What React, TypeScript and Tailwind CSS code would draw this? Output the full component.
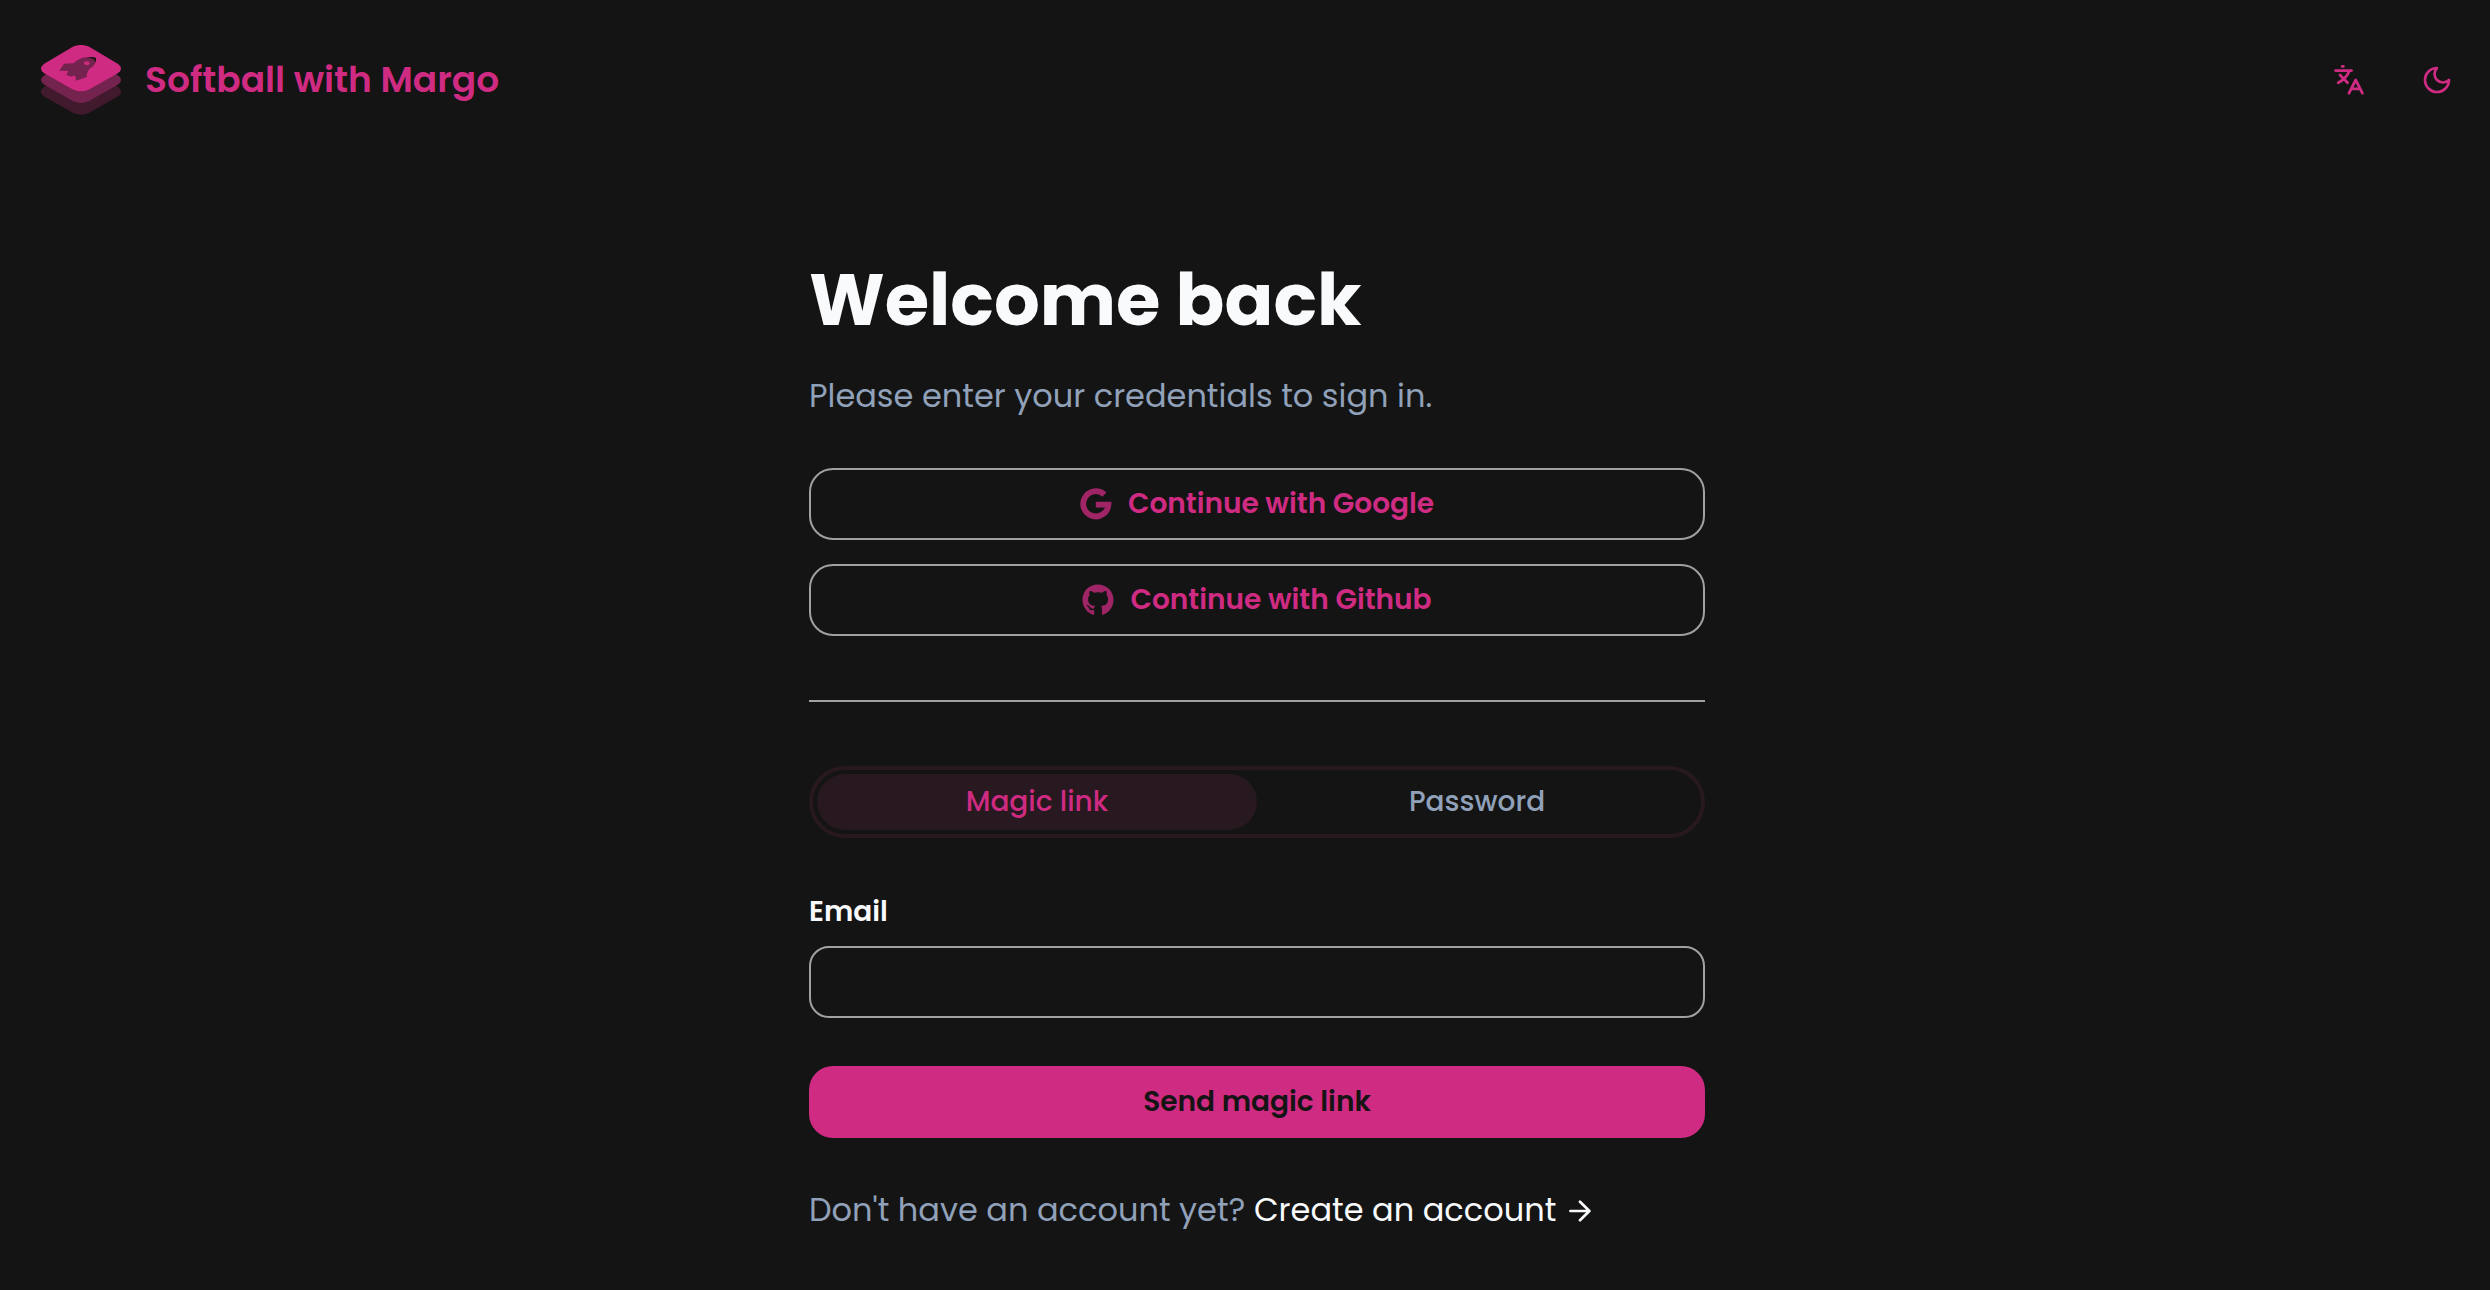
import { useState } from "react";
import { FaGithub } from "react-icons/fa";

const tabs = [
  { id: "magic", label: "Magic link" },
  { id: "password", label: "Password" },
];

const Logo = () => (
  <svg className="h-[70px] w-20 text-[#cf2b82]" viewBox="0 0 80 70" fill="currentColor" aria-hidden="true">
    <defs>
      <path id="tile" d="M31 2.3C36.5-.8 43.5-.8 49 2.3L76.3 18.4C81.2 21.4 81.2 25.6 76.3 28.5L49 44C43.5 47.1 36.5 47.1 31 44L3.7 28.5C-1.2 25.6-1.2 21.4 3.7 18.4Z" />
    </defs>
    <use href="#tile" y="23.2" className="text-[#421a2d]" />
    <use href="#tile" y="11.6" className="text-[#74224e]" />
    <use href="#tile" />
    <g className="text-[#74224e]">
      <path d="M18.3 25.7L23 18.7L32.5 18.2C36 14.6 41.5 12 48 12L54.7 13.2C55.5 17.4 53.5 21.2 48.7 23.6C46.8 26 45.5 29 45.7 32L35 35.7L34.3 30.5L30 31.5L25.3 30L27.5 26Z" />
      <path className="text-[#141414]" d="M47 12.4C50 11.8 52.5 12 54.8 12.8C55.2 14.5 55 16 54.6 17.3C53.8 14.6 51 12.8 47 12.4Z" />
      <ellipse className="text-[#cf2b82]" cx="45.8" cy="18.2" rx="2.8" ry="1.9" />
    </g>
  </svg>
);

const GoogleIcon = () => (
  <svg className="size-8 opacity-75" viewBox="0 0 32 32" fill="none" stroke="currentColor" strokeWidth="5.8" aria-hidden="true">
    <path d="M24.4 6.6A12.6 12.6 0 1 0 28.4 16.6H15.8" />
  </svg>
);

const App = () => {
  const [active, setActive] = useState("magic");

  return (
    <div className="min-h-screen bg-[#141414] pb-12 font-['Poppins','Inter',sans-serif] text-slate-50">
      <header className="flex items-center justify-between pt-[45px] pr-[37px] pl-[41px] text-[#cf2b82]">
        <a href="#" className="flex items-center gap-6 text-[36px] leading-[70px] font-semibold">
          <Logo />
          Softball with Margo
        </a>
        <div className="flex items-center gap-14">
          <button type="button" aria-label="Change language">
            <svg className="size-8" viewBox="0 0 32 32" fill="none" stroke="currentColor" strokeWidth="2.8" strokeLinecap="round" strokeLinejoin="round">
              <path d="M2.6 6.6H18.6M9.2 2.4H10.4M7 11L14.6 18.8M16.2 7C14.8 11.5 10 16.5 5.2 18.7M16 29.2L22.7 16L29.4 29.2M18.4 24.8H27" />
            </svg>
          </button>
          <button type="button" aria-label="Toggle dark mode">
            <svg className="size-8" viewBox="0 0 24 24" fill="none" stroke="currentColor" strokeWidth="2" strokeLinecap="round" strokeLinejoin="round">
              <path d="M12 3a6 6 0 0 0 9 9 9 9 0 1 1-9-9Z" />
            </svg>
          </button>
        </div>
      </header>

      <main className="mx-auto mt-[149px] box-content max-w-4xl pl-6">
        <h1 className="text-[72px] leading-[72px] font-bold">Welcome back</h1>
        <p className="mt-9 text-[32px] leading-[48px] text-slate-400">Please enter your credentials to sign in.</p>

        <div className="mt-12 flex flex-col gap-6 text-[28px] font-semibold text-[#cf2b82]">
          <button type="button" className="flex h-[72px] items-center justify-center gap-4 rounded-3xl border-2 border-[#a1a1a1]">
            <GoogleIcon />
            Continue with Google
          </button>
          <button type="button" className="flex h-[72px] items-center justify-center gap-4 rounded-3xl border-2 border-[#a1a1a1]">
            <FaGithub className="size-8 opacity-75" />
            Continue with Github
          </button>
        </div>

        <hr className="my-16 border-t-2 border-[#a1a1a1]" />

        <div role="tablist" className="flex h-[72px] rounded-full border-4 border-[#28181f] p-1 text-[28px] font-medium">
          {tabs.map((tab) => (
            <button
              key={tab.id}
              type="button"
              role="tab"
              aria-selected={active === tab.id}
              onClick={() => setActive(tab.id)}
              className={`flex-1 rounded-full ${active === tab.id ? "bg-[#28181f] text-[#cf2b82]" : "text-slate-400"}`}
            >
              {tab.label}
            </button>
          ))}
        </div>

        <form className="mt-14" onSubmit={(e) => e.preventDefault()}>
          <label htmlFor="email" className="block text-[28px] leading-[36px] font-semibold">Email</label>
          <input id="email" type="email" className="mt-4 block h-[72px] w-full rounded-[20px] border-2 border-[#a1a1a1] px-6 text-[28px]" />
          <button type="submit" className="mt-12 h-[72px] w-full rounded-3xl bg-[#cf2b82] text-[28px] font-semibold text-[#141414]">
            Send magic link
          </button>
        </form>

        <p className="mt-12 text-[32px] leading-[48px] text-slate-400">
          Don't have an account yet?{" "}
          <a href="#" className="inline-flex items-center gap-3 text-slate-50">
            Create an account
            <svg className="size-6" viewBox="0 0 24 24" fill="none" stroke="currentColor" strokeWidth="2.7" strokeLinecap="round" strokeLinejoin="round" aria-hidden="true">
              <path d="M2.4 13H21.4M12 3.8L21.4 13L12 22.2" />
            </svg>
          </a>
        </p>
      </main>
    </div>
  );
};

export default App;
